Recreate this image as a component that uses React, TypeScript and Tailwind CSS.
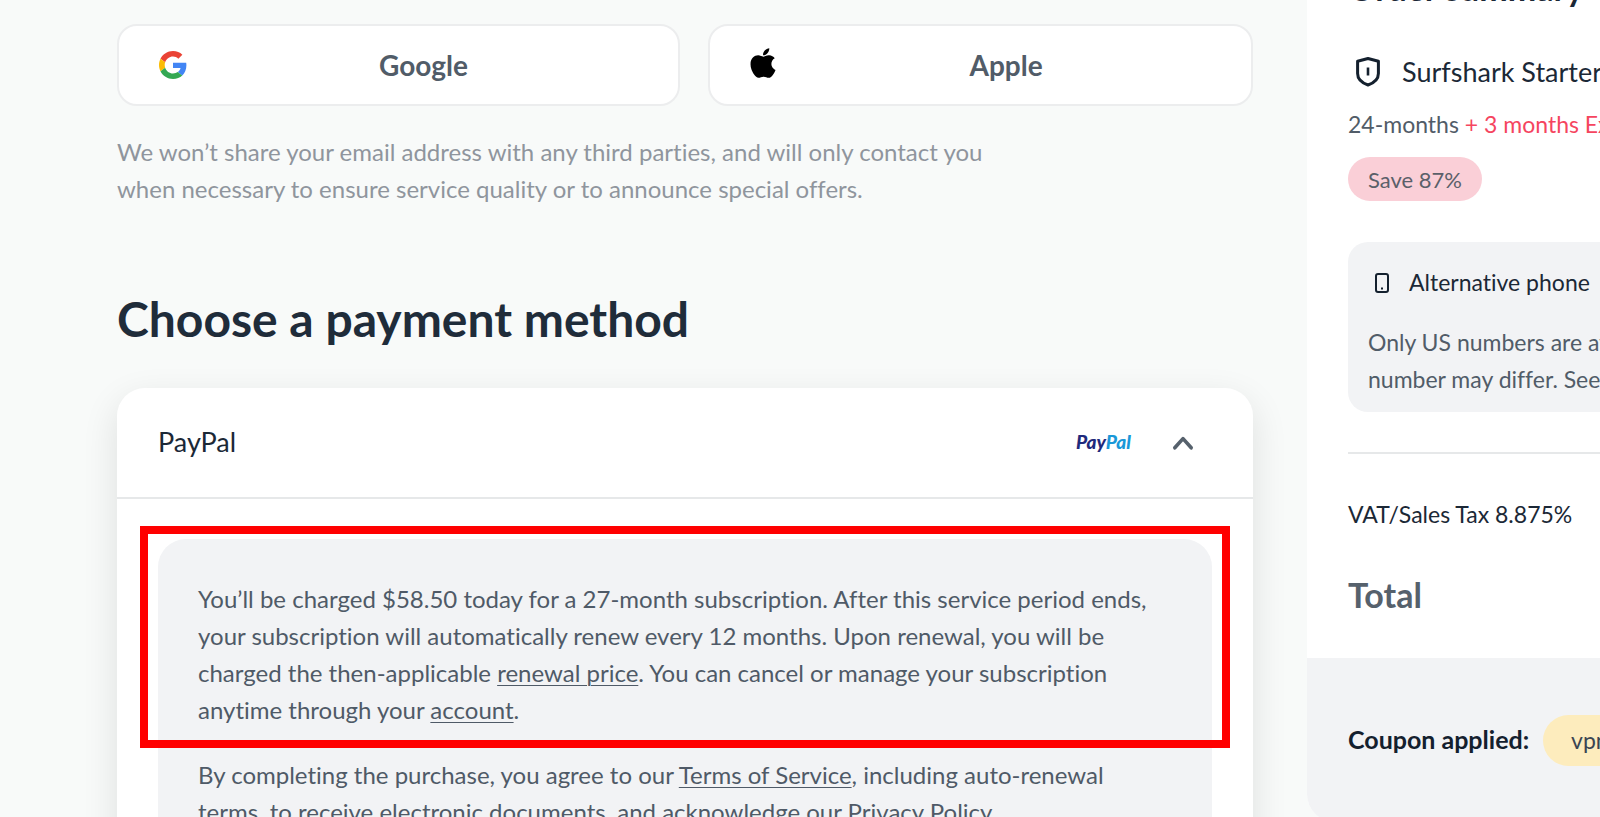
import { useState } from "react";
import type { ReactNode } from "react";
import { FaApple } from "react-icons/fa";

function GoogleIcon() {
  return (
    <svg viewBox="0 0 48 48" className="size-7" aria-hidden="true">
      <path fill="#EA4335" d="M24 9.5c3.54 0 6.71 1.22 9.21 3.6l6.85-6.85C35.9 2.38 30.47 0 24 0 14.62 0 6.51 5.38 2.56 13.22l7.98 6.19C12.43 13.72 17.74 9.5 24 9.5z" />
      <path fill="#4285F4" d="M46.98 24.55c0-1.57-.15-3.09-.38-4.55H24v9.02h12.94c-.58 2.96-2.26 5.48-4.78 7.18l7.73 6c4.51-4.18 7.09-10.36 7.09-17.65z" />
      <path fill="#FBBC05" d="M10.53 28.59c-.48-1.45-.76-2.99-.76-4.59s.27-3.14.76-4.59l-7.98-6.19C.92 16.46 0 20.12 0 24c0 3.88.92 7.54 2.56 10.78l7.97-6.19z" />
      <path fill="#34A853" d="M24 48c6.48 0 11.93-2.13 15.89-5.81l-7.73-6c-2.15 1.45-4.92 2.3-8.16 2.3-6.26 0-11.57-4.22-13.47-9.91l-7.98 6.19C6.51 42.62 14.62 48 24 48z" />
    </svg>
  );
}

function ShieldIcon() {
  return (
    <svg viewBox="0 0 28 32" fill="none" stroke="#14202e" strokeWidth="3" strokeLinejoin="round" strokeLinecap="round" className="h-8 w-7 shrink-0" aria-hidden="true">
      <path d="M14 2.500 3.600 5.300V17.500c0 6.200 4.600 9.500 10.400 11.500 5.800-2 10.400-5.300 10.400-11.500V5.300z" />
      <path d="M14 11.500v8" strokeWidth="2.600" strokeLinecap="butt" />
    </svg>
  );
}

function PhoneIcon() {
  return (
    <svg viewBox="0 0 14 20" fill="none" stroke="#14202e" strokeWidth="2" className="h-5 w-[14px] shrink-0" aria-hidden="true">
      <rect x="1" y="1" width="12" height="18" rx="2" />
      <path d="M6 15.500h2" />
    </svg>
  );
}

function SocialButton({ icon, label }: { icon: ReactNode; label: string }) {
  return (
    <button
      type="button"
      className="flex h-[82px] items-center rounded-[20px] border-2 border-[#ecedee] bg-white pl-10 text-[28px] font-bold text-[#515c68]"
    >
      <span className="w-[220px]">{icon}</span>
      {label}
    </button>
  );
}

function TextLink({ children }: { children: ReactNode }) {
  return (
    <a href="#" className="underline decoration-1 underline-offset-3">
      {children}
    </a>
  );
}

function PaymentCard() {
  const [open, setOpen] = useState(true);

  return (
    <div className="mt-[41px] rounded-t-[28px] bg-white shadow-[0_12px_36px_rgba(0,0,0,0.11)]">
      <button
        type="button"
        aria-expanded={open}
        onClick={() => setOpen(!open)}
        className="flex h-[111px] w-full items-center border-b-2 border-[#e6e8e9] pr-[58px] pl-[41px] text-[27px] text-[#1b2836]"
      >
        <span>PayPal</span>
        <span className="ml-auto text-[19px] font-black text-[#1f2a7c] italic">
          Pay<span className="text-[#1a98d8]">Pal</span>
        </span>
        <svg viewBox="0 0 24 16" fill="none" stroke="#56616c" strokeWidth="3.6" strokeLinecap="round" className="ml-10 h-4 w-6" aria-hidden="true">
          <path d="M3.800 12.800 12 3.600l8.200 9.200" strokeLinejoin="round" />
        </svg>
      </button>

      {open && (
        <div className="px-[41px] pt-10">
          <div className="relative rounded-t-[28px] bg-[#f2f3f5] px-10 pt-[41px] pb-10 text-[24px] leading-[37px] text-[#4f5a67]">
            <div className="pointer-events-none absolute -inset-x-[18px] -top-[13px] h-[222px] border-8 border-[#ff0000]" />
            <p>
              You’ll be charged $58.50 today for a 27-month subscription. After this service period ends,
              <br />
              your subscription will automatically renew every 12 months. Upon renewal, you will be
              <br />
              charged the then-applicable <TextLink>renewal price</TextLink>. You can cancel or manage your subscription
              <br />
              anytime through your <TextLink>account</TextLink>.
            </p>
            <p className="mt-7">
              By completing the purchase, you agree to our <TextLink>Terms of Service</TextLink>, including auto-renewal
              <br />
              terms, to receive electronic documents, and acknowledge our Privacy Policy.
            </p>
          </div>
        </div>
      )}
    </div>
  );
}

function OrderSummary() {
  return (
    <aside className="w-[293px] shrink-0 self-start overflow-hidden rounded-bl-[28px] bg-white whitespace-nowrap">
      <div className="-mt-8 pb-[41px] pl-[41px]">
        <h2 className="text-[34px] leading-10 font-bold text-[#1b2836]">Order summary</h2>
        <div className="mt-11 flex h-10 items-center pl-[6px] text-[27px] text-[#1b2836]">
          <ShieldIcon />
          <span className="ml-5">Surfshark Starter</span>
        </div>
        <p className="mt-[14px] text-[23px] leading-[37px] text-[#515c68]">
          24-months <span className="text-[#f5455f]">+ 3 months Extra</span>
        </p>
        <span className="mt-[14px] inline-flex h-11 items-center rounded-full bg-[#facfd7] px-5 text-[22px] text-[#5a6069]">
          Save 87%
        </span>

        <div className="mt-[41px] h-[170px] rounded-l-[20px] bg-[#f2f3f5] pt-[22px] pl-5 text-[23px] leading-[37px] text-[#515c68]">
          <div className="flex items-center pl-[7px] text-[#1b2836]">
            <PhoneIcon />
            <span className="ml-5">Alternative phone</span>
          </div>
          <p className="mt-[23px]">
            Only US numbers are available,
            <br />
            number may differ. See details
          </p>
        </div>

        <hr className="mt-10 border-t-2 border-[#e6e8e9]" />
        <p className="mt-[42px] text-[23px] leading-[37px] text-[#1b2836]">VAT/Sales Tax 8.875%</p>
        <p className="mt-10 text-[34px] leading-[44px] font-bold text-[#56616c]">Total</p>
      </div>
      <div className="flex h-[164px] items-center bg-[#f2f3f5] pl-[41px]">
        <span className="text-[25px] font-bold text-[#14202e]">Coupon applied:</span>
        <span className="ml-[14px] flex h-[51px] items-center rounded-full bg-[#fdecbd] px-7 text-[23px] text-[#3b4653]">
          vpn
        </span>
      </div>
    </aside>
  );
}

export default function App() {
  return (
    <div className="flex h-screen overflow-hidden bg-[#f8faf9] font-['Lato',sans-serif] [font-variant-ligatures:none]">
      <main className="min-w-0 flex-1 pt-6 pr-[54px] pl-[117px]">
        <div className="grid grid-cols-[562fr_545fr] gap-7">
          <SocialButton icon={<GoogleIcon />} label="Google" />
          <SocialButton icon={<FaApple className="mb-1 -ml-1 size-[34px] text-black" />} label="Apple" />
        </div>
        <p className="mt-[27px] text-[24px] leading-[37px] text-[#8f959d]">
          We won’t share your email address with any third parties, and will only contact you
          <br />
          when necessary to ensure service quality or to announce special offers.
        </p>
        <h1 className="mt-[84px] text-[48px] leading-14 font-bold text-[#1f2c3a]">Choose a payment method</h1>
        <PaymentCard />
      </main>
      <OrderSummary />
    </div>
  );
}
